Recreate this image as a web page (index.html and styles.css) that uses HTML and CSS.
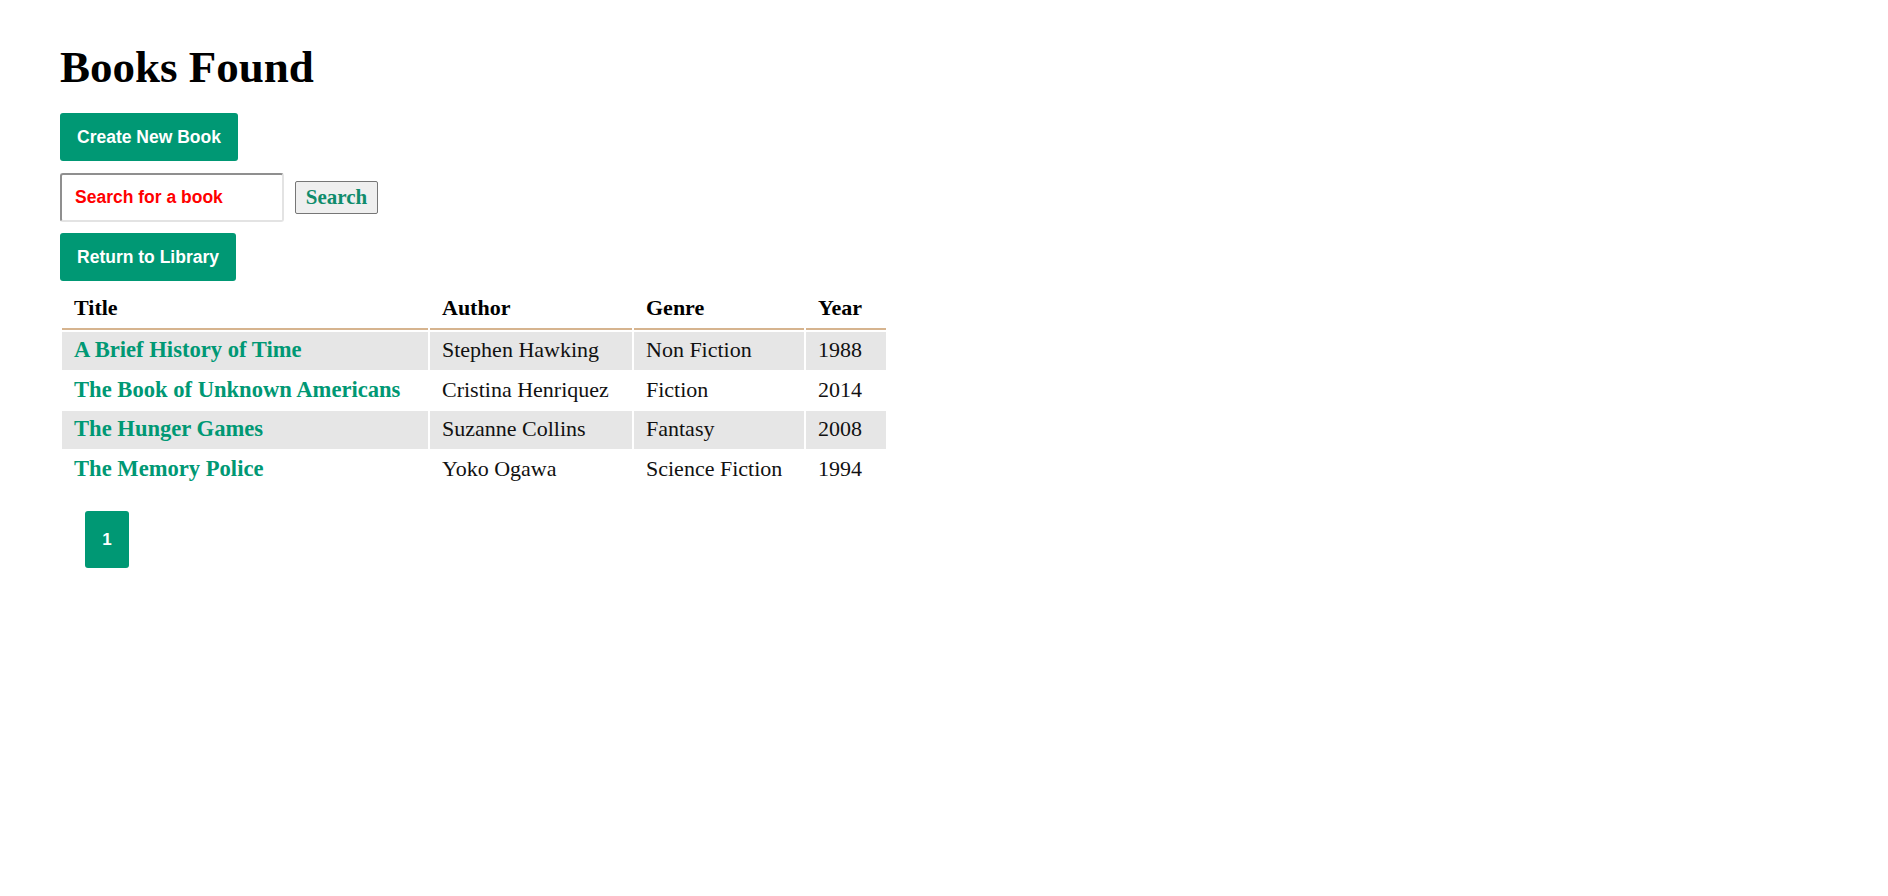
FILE: index.html
```html
<!DOCTYPE html>
<html lang="en">
<head>
<meta charset="utf-8">
<title>Books Found</title>
<link rel="stylesheet" href="styles.css">
</head>
<body>
<main class="page">
  <h1 class="page-title">Books Found</h1>
  <a class="btn btn-create" href="#">Create New Book</a>
  <form class="search-row">
    <input class="search-input" type="text" placeholder="Search for a book">
    <button class="search-btn" type="button">Search</button>
  </form>
  <a class="btn btn-return" href="#">Return to Library</a>
  <table class="books">
    <thead>
      <tr>
        <th class="col-title">Title</th>
        <th class="col-author">Author</th>
        <th class="col-genre">Genre</th>
        <th class="col-year">Year</th>
      </tr>
    </thead>
    <tbody>
      <tr class="alt">
        <td><a class="book-link" href="#">A Brief History of Time</a></td>
        <td>Stephen Hawking</td>
        <td>Non Fiction</td>
        <td>1988</td>
      </tr>
      <tr>
        <td><a class="book-link" href="#">The Book of Unknown Americans</a></td>
        <td>Cristina Henriquez</td>
        <td>Fiction</td>
        <td>2014</td>
      </tr>
      <tr class="alt">
        <td><a class="book-link" href="#">The Hunger Games</a></td>
        <td>Suzanne Collins</td>
        <td>Fantasy</td>
        <td>2008</td>
      </tr>
      <tr>
        <td><a class="book-link" href="#">The Memory Police</a></td>
        <td>Yoko Ogawa</td>
        <td>Science Fiction</td>
        <td>1994</td>
      </tr>
    </tbody>
  </table>
  <nav class="pagination">
    <a class="page-link" href="#">1</a>
  </nav>
</main>
</body>
</html>
```

FILE: styles.css
```css
html, body {
  margin: 0;
  padding: 0;
  background: #ffffff;
}

body {
  font-family: "Liberation Serif", "Times New Roman", serif;
  color: #000000;
}

.page {
  padding: 42px 60px;
}

.page-title {
  margin: 0 0 21px 0;
  font-size: 45px;
  line-height: 50px;
  font-weight: 700;
  color: #000000;
}

.btn {
  display: flex;
  align-items: center;
  justify-content: center;
  height: 48px;
  box-sizing: border-box;
  background: #009874;
  color: #ffffff;
  text-decoration: none;
  font-family: "Liberation Sans", Arial, sans-serif;
  font-weight: 700;
  font-size: 17.5px;
  border-radius: 3px;
}

.btn-create {
  width: 178px;
}

.btn-return {
  width: 176px;
  margin-top: 11px;
}

.search-row {
  display: flex;
  align-items: center;
  gap: 11px;
  margin: 12px 0 0 0;
}

.search-input {
  width: 224px;
  height: 49px;
  box-sizing: border-box;
  margin: 0;
  padding: 0 12px 0 13px;
  border-width: 2px;
  border-style: solid;
  border-color: #8f8f8f #e3e3e3 #e3e3e3 #8f8f8f;
  border-radius: 3px;
  font-family: "Liberation Sans", Arial, sans-serif;
  font-weight: 700;
  font-size: 17.5px;
  color: #ff0000;
  background: #ffffff;
}

.search-input::placeholder {
  color: #ff0000;
  opacity: 1;
}

.search-btn {
  width: 83px;
  height: 33px;
  box-sizing: border-box;
  margin: 0;
  padding: 0;
  background: #efefef;
  border: 1px solid #767676;
  border-radius: 2px;
  font-family: "Liberation Serif", "Times New Roman", serif;
  font-weight: 700;
  font-size: 21px;
  line-height: 1;
  color: #0f8c6c;
}

.books {
  margin-top: 8px;
  table-layout: fixed;
  width: 828px;
  border-collapse: separate;
  border-spacing: 2px;
  font-size: 22px;
  line-height: 25.5px;
}

.books th,
.books td {
  box-sizing: border-box;
  text-align: left;
  white-space: nowrap;
}

.books th {
  padding: 4px 24px 7.5px 12px;
  border-bottom: 2px solid #d6b48f;
  font-weight: 700;
  color: #000000;
}

.books td {
  padding: 5px 24px 7px 12px;
  color: #111111;
}

.col-title { width: 366px; }
.col-author { width: 202px; }
.col-genre { width: 170px; }
.col-year { width: 80px; }

.books tr.alt td {
  background: #e6e6e6;
}

.book-link {
  color: #009874;
  font-weight: 700;
  font-size: 22.6px;
  text-decoration: none;
}

.pagination {
  display: flex;
  margin: 21px 0 0 25px;
}

.page-link {
  display: flex;
  align-items: center;
  justify-content: center;
  width: 44px;
  height: 57px;
  background: #009874;
  color: #ffffff;
  border-radius: 3px;
  text-decoration: none;
  font-family: "Liberation Sans", Arial, sans-serif;
  font-weight: 700;
  font-size: 17px;
}
```
